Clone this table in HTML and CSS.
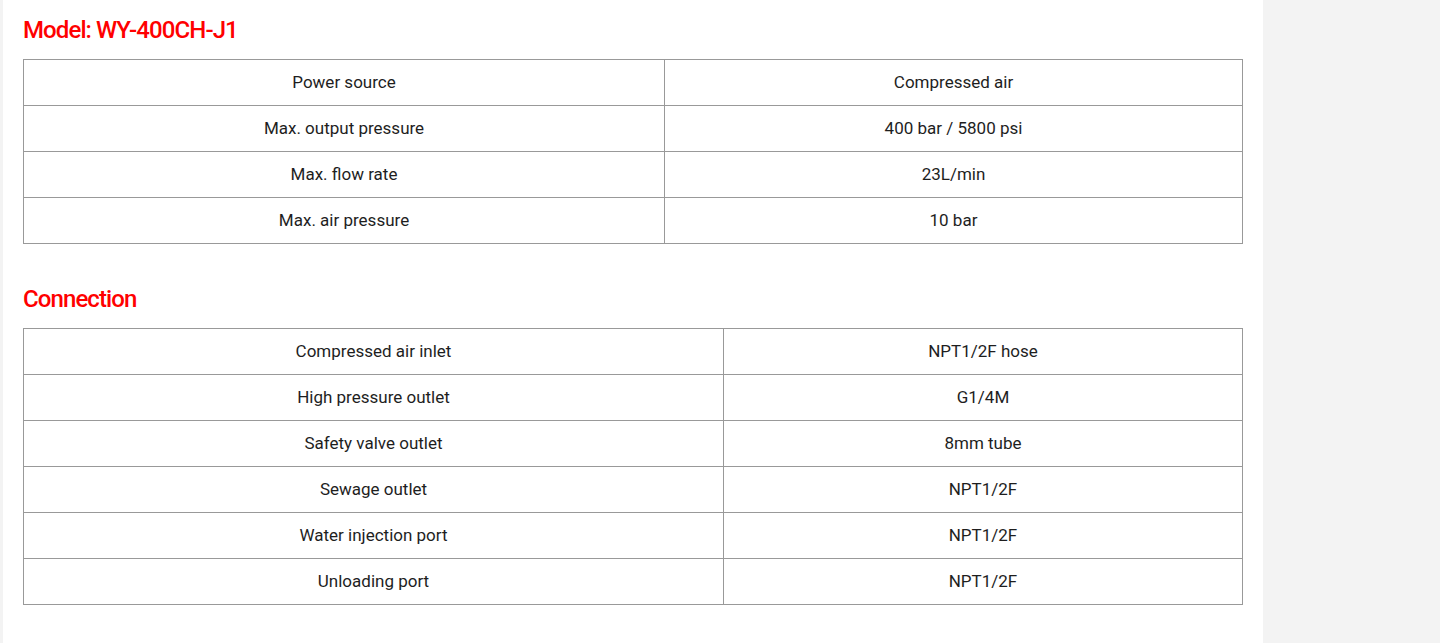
FILE: index.html
```html
<!DOCTYPE html>
<html>
<head>
<meta charset="utf-8">
<link rel="stylesheet" href="styles.css">
</head>
<body>
<main class="page">
  <h2 class="title">Model: WY-400CH-J1</h2>
  <table class="spec spec-a">
    <tr><td>Power source</td><td>Compressed air</td></tr>
    <tr><td>Max. output pressure</td><td>400 bar / 5800 psi</td></tr>
    <tr><td>Max. flow rate</td><td>23L/min</td></tr>
    <tr><td>Max. air pressure</td><td>10 bar</td></tr>
  </table>
  <h2 class="title title-gap">Connection</h2>
  <table class="spec spec-b">
    <tr><td>Compressed air inlet</td><td>NPT1/2F hose</td></tr>
    <tr><td>High pressure outlet</td><td>G1/4M</td></tr>
    <tr><td>Safety valve outlet</td><td>8mm tube</td></tr>
    <tr><td>Sewage outlet</td><td>NPT1/2F</td></tr>
    <tr><td>Water injection port</td><td>NPT1/2F</td></tr>
    <tr><td>Unloading port</td><td>NPT1/2F</td></tr>
  </table>
</main>
</body>
</html>
```
FILE: styles.css
```css
html, body {
  margin: 0;
  padding: 0;
  background: #f3f3f3;
  height: 100%;
}
.page {
  margin-left: 3px;
  width: 1260px;
  min-height: 100%;
  box-sizing: border-box;
  padding: 14px 20px 20px 20px;
  background: #ffffff;
  font-family: Roboto, "Noto Sans", sans-serif;
  color: #1e1e1e;
}
.title {
  margin: 0;
  color: #ff0000;
  font-size: 24px;
  font-weight: 500;
  line-height: 32px;
  letter-spacing: -0.9px;
  padding-bottom: 13px;
}
.title-gap {
  margin-top: 39px;
}
.spec {
  width: 1220px;
  border-collapse: collapse;
  font-size: 17px;
}
.spec td {
  border: 1px solid #999;
  height: 43px;
  padding: 0 0 2px 0;
  text-align: center;
  vertical-align: middle;
}
.spec-a td:first-child { width: 640px; }
.spec-b td:first-child { width: 699px; }
```
